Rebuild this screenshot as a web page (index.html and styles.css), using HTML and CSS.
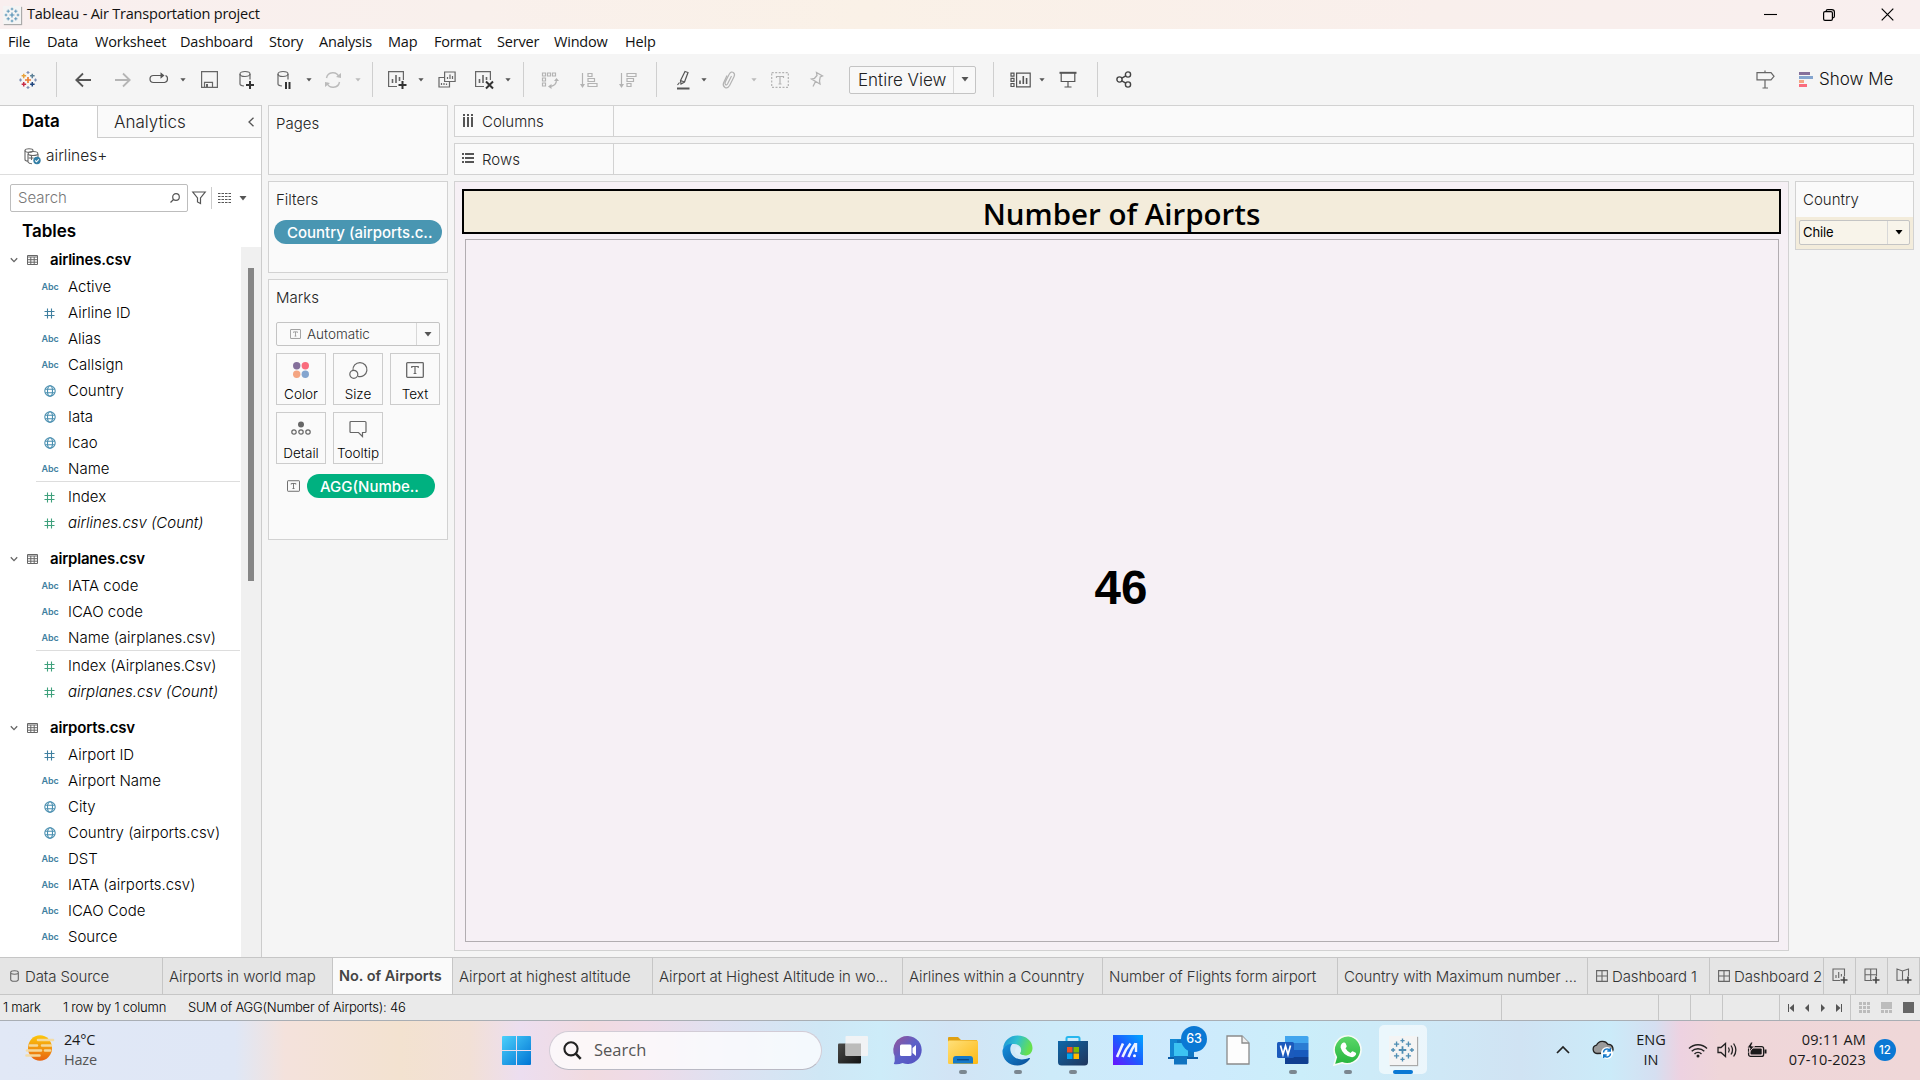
FILE: index.html
```html
<!DOCTYPE html>
<html lang="en">
<head>
<meta charset="utf-8">
<title>Tableau - Air Transportation project</title>
<link rel="stylesheet" href="styles.css">
</head>
<body>
<svg class="defs" width="0" height="0" aria-hidden="true">
  <defs>
    <symbol id="caret" viewBox="0 0 8 5"><path d="M0.5 0h7L4 4.6z" fill="currentColor"/></symbol>
    <symbol id="chev" viewBox="0 0 8 8"><path d="M.8 2.2 4 5.6l3.2-3.4" fill="none" stroke="#666" stroke-width="1.3"/></symbol>
    <symbol id="table" viewBox="0 0 11 10"><path d="M.5.5h10v9H.5zM.5 2h10M.5 4.7h10M.5 7.2h10M3.8 2v7.5M7.2 2v7.5" fill="none" stroke="#666"/></symbol>
    <symbol id="hash" viewBox="0 0 11 11"><path d="M3.5.5v10M7.5.5v10M.5 3.5h10M.5 7.5h10" fill="none" stroke="currentColor" stroke-width="1.1"/></symbol>
    <symbol id="globe" viewBox="0 0 12 12"><g fill="none" stroke="#4a8fb0" stroke-width="1.1"><circle cx="6" cy="6" r="5.2"/><ellipse cx="6" cy="6" rx="2.5" ry="5.2"/><path d="M1.2 4.2h9.6M1.2 7.8h9.6"/></g></symbol>
    <symbol id="tbox" viewBox="0 0 18 16"><rect x=".7" y=".7" width="16.6" height="14.6" rx=".8" fill="none" stroke="currentColor" stroke-width="1.3"/><path d="M5.8 6V4.5h6.4V6M9 4.5v7M7.6 11.5h2.8" fill="none" stroke="currentColor" stroke-width="1.2"/></symbol>
    <symbol id="tableau" viewBox="0 0 24 24"><g fill="none" stroke="#4f8db3" stroke-width="1.3"><path d="M12 8.4v7.2M8.4 12h7.2" stroke-width="1.7"/><path d="M12 1v4M10 3h4M12 19v4M10 21h4M3 10v4M1 12h4M21 10v4M19 12h4M6.3 3.8v5M3.8 6.3h5M17.7 3.8v5M15.2 6.3h5M6.3 15.2v5M3.8 17.7h5M17.7 15.2v5M15.2 17.7h5"/></g></symbol>
    <symbol id="grid4" viewBox="0 0 12 12"><path d="M.6.6h10.8v10.8H.6zM6 .6v10.8M.6 6h10.8" fill="none" stroke="#666" stroke-width="1.1"/></symbol>
    <linearGradient id="win" x1="0" y1="0" x2="1" y2="1"><stop offset="0" stop-color="#4cd0fb"/><stop offset="1" stop-color="#0074d4"/></linearGradient>
    <linearGradient id="sun" x1="0" y1="0" x2="0" y2="1"><stop offset="0" stop-color="#fcc70c"/><stop offset="1" stop-color="#e86410"/></linearGradient>
    <linearGradient id="chatg" x1="0" y1="0" x2="1" y2="1"><stop offset="0" stop-color="#9a5596"/><stop offset=".5" stop-color="#5b60c8"/><stop offset="1" stop-color="#5550c0"/></linearGradient>
    <linearGradient id="fold" x1="0" y1="0" x2="1" y2="1"><stop offset="0" stop-color="#ffe07a"/><stop offset="1" stop-color="#fdb913"/></linearGradient>
    <linearGradient id="edge1" x1="0" y1="0" x2="1" y2=".3"><stop offset="0" stop-color="#1c8fd8"/><stop offset=".5" stop-color="#2fc0cf"/><stop offset="1" stop-color="#66e04e"/></linearGradient>
    <linearGradient id="edge2" x1="0" y1="0" x2="1" y2="1"><stop offset="0" stop-color="#1593df"/><stop offset="1" stop-color="#0b4d96"/></linearGradient>
    <linearGradient id="store" x1="0" y1="0" x2="1" y2="1"><stop offset="0" stop-color="#0f67a8"/><stop offset="1" stop-color="#20365c"/></linearGradient>
    <linearGradient id="asus" x1="0" y1="1" x2="1" y2="0"><stop offset="0" stop-color="#6a12ff"/><stop offset=".5" stop-color="#1b5cff"/><stop offset="1" stop-color="#00a8ff"/></linearGradient>
    <linearGradient id="wa" x1="0" y1="0" x2="0" y2="1"><stop offset="0" stop-color="#5dd86a"/><stop offset="1" stop-color="#25b43c"/></linearGradient>
    <linearGradient id="dark" x1="0" y1="0" x2="1" y2="1"><stop offset="0" stop-color="#4a4a48"/><stop offset="1" stop-color="#141414"/></linearGradient>
  </defs>
</svg>

<header class="titlebar">
  <span class="app-tile small"><svg width="16" height="16"><use href="#tableau"/></svg></span>
  <span class="app-title">Tableau - Air Transportation project</span>
  <div class="win-btns">
    <svg width="13" height="14" viewBox="0 0 13 14"><path d="M0 6.5h13" stroke="#000" stroke-width="1.1"/></svg>
    <svg width="12" height="12" viewBox="0 0 12 12" fill="none" stroke="#000" stroke-width="1.2"><rect x=".6" y="2.6" width="8.8" height="8.8" rx="1.4"/><path d="M3 2.2Q3.2.6 4.8.6h4Q11.4.6 11.4 3v4.2q0 1.5-1.6 1.8"/></svg>
    <svg width="13" height="13" viewBox="0 0 13 13" fill="none" stroke="#000" stroke-width="1.2"><path d="m.7.7 11.6 11.6M12.3.7.7 12.3"/></svg>
  </div>
</header>

<nav class="menubar">
  <span class="m1">File</span><span class="m2">Data</span><span class="m3">Worksheet</span><span class="m4">Dashboard</span><span class="m5">Story</span><span class="m6">Analysis</span><span class="m7">Map</span><span class="m8">Format</span><span class="m9">Server</span><span class="m10">Window</span><span>Help</span>
</nav>

<div class="toolbar">
  <svg width="18" height="18" viewBox="0 0 24 24" fill="none" stroke-width="1.6"><path d="M12 8v8M8 12h8" stroke="#eb7a2e" stroke-width="2.2"/><path d="M6.3 3.5v6M3.5 6.3h6" stroke="#e8a23a" stroke-width="2"/><path d="M17.7 3.5v6M14.8 6.3h6" stroke="#5b7f96" stroke-width="2"/><path d="M6.3 14.8v6M3.5 17.7h6" stroke="#c72c48" stroke-width="2"/><path d="M17.7 14.8v6M14.8 17.7h6" stroke="#1f457e" stroke-width="2"/><path d="M12 0v4M10 2h4M12 20v4M10 22h4M2 10v4M0 12h4M22 10v4M20 12h4" stroke="#7f8fb5"/></svg>
  <i class="sep"></i>
  <svg width="16" height="16" viewBox="0 0 16 16" fill="none" stroke="#555" stroke-width="1.8"><path d="M8 1.500 1.300 8 8 14.500M1.300 8H16"/></svg>
  <svg width="16" height="16" viewBox="0 0 16 16" fill="none" stroke="#b5b5b5" stroke-width="1.8"><path d="M8 1.500 14.700 8 8 14.500M14.700 8H0"/></svg>
  <svg class="up2" width="20" height="12" viewBox="0 0 20 12" fill="none" stroke="#555" stroke-width="1.200"><path d="M14 3.500H4.500a3 3 0 0 0 0 7h11q3-.5 3-3.500t-2-3.300"/><path d="M11.500.3v6.400L15.500 3.500z" fill="#555" stroke="none"/></svg>
  <svg class="cr" width="6" height="4"><use href="#caret"/></svg>
  <svg width="17" height="17" viewBox="0 0 17 17" fill="none" stroke="#666" stroke-width="1.200"><path d="M.6.6h15.800v15.800H.6zM3.500 16.400v-5h8v5"/><path d="M5 13h2v3H5z" fill="#666" stroke="none"/></svg>
  <svg width="18" height="20" viewBox="0 0 18 20" fill="none" stroke="#666" stroke-width="1.200"><ellipse cx="7" cy="4" rx="5" ry="2.500"/><path d="M2 4v10q0 1.500 4 2M12 4v5.500"/><path d="M12 11v8M8 15h8" stroke="#333" stroke-width="2"/></svg>
  <svg width="18" height="20" viewBox="0 0 18 20" fill="none" stroke="#666" stroke-width="1.200"><ellipse cx="7" cy="4" rx="5" ry="2.500"/><path d="M2 4v10q0 1.500 4 2M12 4v5.500"/><path d="M10 12v7M13.500 12v7" stroke="#333" stroke-width="2"/></svg>
  <svg class="cr" width="6" height="4"><use href="#caret"/></svg>
  <svg width="18" height="16" viewBox="0 0 18 16" fill="none" stroke="#bbb" stroke-width="1.400"><path d="M2.500 6A6.500 6.500 0 0 1 15 5M15.500 10A6.500 6.500 0 0 1 3 11"/><path d="m12 5 5 1V1zM6 11l-5-1v5z" fill="#bbb" stroke="none"/></svg>
  <svg class="cr off" width="6" height="4"><use href="#caret"/></svg>
  <i class="sep"></i>
  <svg width="20" height="20" viewBox="0 0 20 20" fill="none" stroke="#666" stroke-width="1.200"><path d="M10 16.500H1.600V1.600h14.800V10"/><path d="M5.500 13V9M9 13V5M12.500 11V7" stroke-width="1.600"/><path d="M15.500 11v8M11.500 15h8" stroke="#333" stroke-width="2"/></svg>
  <svg class="cr" width="6" height="4"><use href="#caret"/></svg>
  <svg width="18" height="18" viewBox="0 0 18 18" fill="none" stroke="#666" stroke-width="1.200"><path d="M6.600 1h10.500v9.500H6.600zM6 6.500H1V16h10.500v-5"/><path d="M9.500 8V6M12 8V3.500M14.500 8V5M3.500 14v-2M6 14v-2M8.500 14v-1.500"/></svg>
  <svg width="20" height="20" viewBox="0 0 20 20" fill="none" stroke="#666" stroke-width="1.200"><path d="M10 16.500H1.600V1.600h14.800V10"/><path d="M5.500 13V9M9 13V5M12.500 10V7" stroke-width="1.600"/><path d="m12 11.500 7 7M19 11.500l-7 7" stroke="#333" stroke-width="2"/></svg>
  <svg class="cr" width="6" height="4"><use href="#caret"/></svg>
  <i class="sep"></i>
  <svg width="18" height="18" viewBox="0 0 18 18" fill="none" stroke="#b3b3b3" stroke-width="1.200"><path d="M1.500 2h3v3h-3zM6.500 2h3v3h-3zM11.500 2h3v3h-3zM1.500 7h3v3h-3zM1.500 12h3v3h-3zM15.500 9q0 6-7 6.500"/><path d="m13 10 2.500-3L18 10zM10.500 13v5L7 15.500z" fill="#b3b3b3" stroke="none"/></svg>
  <svg width="18" height="16" viewBox="0 0 18 16" fill="none" stroke="#b3b3b3" stroke-width="1.200"><path d="M2.500 1v13M8 1.500h4v3H8zM8 6.500h6.500v3H8zM8 11.500h9v3H8z"/><path d="M0 12h5l-2.500 4z" fill="#b3b3b3" stroke="none"/></svg>
  <svg width="18" height="16" viewBox="0 0 18 16" fill="none" stroke="#b3b3b3" stroke-width="1.200"><path d="M2.500 1v13M8 1.500h9v3H8zM8 6.500h6.500v3H8zM8 11.500h4v3H8z"/><path d="M0 12h5l-2.500 4z" fill="#b3b3b3" stroke="none"/></svg>
  <i class="sep"></i>
  <svg width="14" height="20" viewBox="0 0 14 20" fill="none" stroke="#555" stroke-width="1.200"><path d="M9 1.500 12 2.500 8.500 12l-3.500 2-.5-3.500zM4.500 10.500l4 1.500M3.500 12.500 1.500 15"/><path d="M1 18.500h12.500" stroke-width="2"/></svg>
  <svg class="cr" width="6" height="4"><use href="#caret"/></svg>
  <svg width="14" height="18" viewBox="0 0 14 18" fill="none" stroke="#b3b3b3" stroke-width="1.200"><path d="m9.500 5-4 8q-1 1.500-2 .5t-.2-2.500l4-8q2-3 4-1.500t.8 4L7.600 14.500Q5.500 18 3 16.500T1.500 12L5 4.500"/></svg>
  <svg class="cr off" width="6" height="4"><use href="#caret"/></svg>
  <svg width="18" height="16" viewBox="0 0 18 16" fill="none" stroke="#b3b3b3" stroke-width="1.200"><path d="M.7.700h16.600v14.600H.7z" stroke-dasharray="2 1.500"/><path d="M5.500 6V4.500h7V6M9 4.500v7.500M7.500 12h3"/></svg>
  <svg width="14" height="17" viewBox="0 0 14 17" fill="none" stroke="#b3b3b3" stroke-width="1.300"><path d="m6.500 1.500 6 3.500-2.300 1-.7 4 .5 3-8.500-5 3-.7L7 4.500zM5.500 10.500 3 15.500"/></svg>
  <div class="select view-select"><span>Entire View</span><b><svg class="cr" width="8" height="5"><use href="#caret"/></svg></b></div>
  <i class="sep"></i>
  <svg width="21" height="16" viewBox="0 0 21 16" fill="none" stroke="#555" stroke-width="1.200"><path d="M1 1.200h3v3H1zM1 6.300h3v3H1zM1 11.500h3v3H1zM6.600 1.200h13.600v13.600H6.600z"/><path d="M10 12V8.500M13.300 12V4M16.600 12V6" stroke-width="1.600"/></svg>
  <svg class="cr" width="6" height="4"><use href="#caret"/></svg>
  <svg width="18" height="17" viewBox="0 0 18 17" fill="none" stroke="#555" stroke-width="1.200"><path d="M.5 1.800h17" stroke-width="2"/><path d="M2.200 2v8.500h13.600V2M9 10.500v5.500M5.500 16h7"/></svg>
  <i class="sep"></i>
  <svg width="16" height="17" viewBox="0 0 16 17" fill="none" stroke="#444" stroke-width="1.400"><circle cx="3.500" cy="8.500" r="2.600"/><circle cx="12" cy="3.500" r="2.600"/><circle cx="12" cy="13.500" r="2.600"/><path d="m5.800 7.200 4-2.400M5.800 9.800l4 2.400"/></svg>
  <span></span>
  <svg width="19" height="19" viewBox="0 0 19 19" fill="none" stroke="#666" stroke-width="1.200"><path d="M1 2.700h14l3 3.600-3 3.600H1zM9 .5v2M9 10v8M6.500 18h5.500"/></svg>
  <div class="showme"><svg width="14" height="15" viewBox="0 0 14 15"><path d="M0 0h11v3H0z" fill="#85709b"/><path d="M0 4h14v3H0z" fill="#84a5cf"/><path d="M0 8h5v3H0z" fill="#f4a582"/><path d="M0 12h8v3H0z" fill="#fa6c7d"/></svg><span>Show Me</span></div>
</div>

<main class="workspace">
  <aside class="datapane">
    <div class="pane-tabs"><span class="on">Data</span><span class="off">Analytics<svg width="6" height="10" viewBox="0 0 6 10"><path d="M5.500.7 1 5l4.500 4.300" fill="none" stroke="#555" stroke-width="1.300"/></svg></span></div>
    <div class="source"><svg width="17" height="17" viewBox="0 0 17 17" fill="none" stroke="#666" stroke-width="1.100"><ellipse cx="5" cy="2.500" rx="4" ry="1.800"/><path d="M1 2.500v9q0 1.500 3 1.800M4 6v8q1 1.800 4 1.800M14 6v3"/><ellipse cx="9" cy="5.500" rx="4.800" ry="2"/><path d="M4.500 10h5M7.500 8v4"/><circle cx="13" cy="12.500" r="3.700" fill="#337fa6" stroke="none"/><path d="m11.200 12.500 1.300 1.300 2.300-2.500" stroke="#fff"/></svg><span>airlines+</span></div>
    <div class="finder">
      <div class="search"><span>Search</span><svg width="10" height="10" viewBox="0 0 10 10" fill="none" stroke="#555" stroke-width="1.200"><circle cx="6" cy="4" r="3.300"/><path d="M3.500 6.500.5 9.500"/></svg></div>
      <svg width="14" height="14" viewBox="0 0 14 14" fill="none" stroke="#555" stroke-width="1.200"><path d="M.8 1h12.400L8.500 7v5.500L5.500 11V7z"/></svg>
      <i></i>
      <svg width="13" height="10" viewBox="0 0 13 10"><path d="M0 .5h13M0 3.500h13M0 6.500h13M0 9.500h13" stroke="#555" stroke-width="1" stroke-dasharray="2.500 1"/></svg>
      <svg class="cr" width="8" height="5"><use href="#caret"/></svg>
    </div>
    <h2>Tables</h2>
    <div class="tree">
      <div class="fields">
        <div class="tbl"><svg width="8" height="8"><use href="#chev"/></svg><svg width="11" height="10"><use href="#table"/></svg><span>airlines.csv</span></div>
        <div class="f"><em>Abc</em><span>Active</span></div>
        <div class="f"><svg class="dim" width="11" height="11"><use href="#hash"/></svg><span>Airline ID</span></div>
        <div class="f"><em>Abc</em><span>Alias</span></div>
        <div class="f"><em>Abc</em><span>Callsign</span></div>
        <div class="f"><svg width="12" height="12"><use href="#globe"/></svg><span>Country</span></div>
        <div class="f"><svg width="12" height="12"><use href="#globe"/></svg><span>Iata</span></div>
        <div class="f"><svg width="12" height="12"><use href="#globe"/></svg><span>Icao</span></div>
        <div class="f"><em>Abc</em><span>Name</span></div>
        <hr>
        <div class="f"><svg class="mea" width="11" height="11"><use href="#hash"/></svg><span>Index</span></div>
        <div class="f"><svg class="mea" width="11" height="11"><use href="#hash"/></svg><span class="it">airlines.csv (Count)</span></div>
        <div class="tbl next"><svg width="8" height="8"><use href="#chev"/></svg><svg width="11" height="10"><use href="#table"/></svg><span>airplanes.csv</span></div>
        <div class="f"><em>Abc</em><span>IATA code</span></div>
        <div class="f"><em>Abc</em><span>ICAO code</span></div>
        <div class="f"><em>Abc</em><span>Name (airplanes.csv)</span></div>
        <hr>
        <div class="f"><svg class="mea" width="11" height="11"><use href="#hash"/></svg><span>Index (Airplanes.Csv)</span></div>
        <div class="f"><svg class="mea" width="11" height="11"><use href="#hash"/></svg><span class="it">airplanes.csv (Count)</span></div>
        <div class="tbl next"><svg width="8" height="8"><use href="#chev"/></svg><svg width="11" height="10"><use href="#table"/></svg><span>airports.csv</span></div>
        <div class="f"><svg class="dim" width="11" height="11"><use href="#hash"/></svg><span>Airport ID</span></div>
        <div class="f"><em>Abc</em><span>Airport Name</span></div>
        <div class="f"><svg width="12" height="12"><use href="#globe"/></svg><span>City</span></div>
        <div class="f"><svg width="12" height="12"><use href="#globe"/></svg><span>Country (airports.csv)</span></div>
        <div class="f"><em>Abc</em><span>DST</span></div>
        <div class="f"><em>Abc</em><span>IATA (airports.csv)</span></div>
        <div class="f"><em>Abc</em><span>ICAO Code</span></div>
        <div class="f"><em>Abc</em><span>Source</span></div>
      </div>
      <div class="track"><div class="thumb"></div></div>
    </div>
  </aside>

  <section class="cards">
    <div class="card pages"><h3>Pages</h3></div>
    <div class="card filters"><h3>Filters</h3><div class="pill blue">Country (airports.c..</div></div>
    <div class="card marks">
      <h3>Marks</h3>
      <div class="select mark-select"><svg width="11" height="10"><use href="#tbox"/></svg><span>Automatic</span><b><svg class="cr" width="8" height="5"><use href="#caret"/></svg></b></div>
      <div class="mark-grid">
        <div><svg width="18" height="18" viewBox="0 0 18 18"><circle cx="4.700" cy="4.700" r="3.700" fill="#85709b"/><circle cx="13.300" cy="4.700" r="3.700" fill="#fa6c7d"/><circle cx="4.700" cy="13.300" r="3.700" fill="#f4a582"/><circle cx="13.300" cy="13.300" r="3.700" fill="#84a5cf"/></svg><span>Color</span></div>
        <div><svg width="18" height="18" viewBox="0 0 18 18" fill="none" stroke="#666" stroke-width="1.200"><path d="M4 9.500A7 7 0 1 1 9 15.300"/><circle cx="4.800" cy="13.300" r="4"/></svg><span>Size</span></div>
        <div class="t"><svg width="18" height="16"><use href="#tbox"/></svg><span>Text</span></div>
        <div><svg width="20" height="18" viewBox="0 0 20 18" fill="none" stroke="#666" stroke-width="1.200"><circle cx="10" cy="4.500" r="3" fill="#666" stroke="none"/><circle cx="3" cy="12" r="2.200"/><circle cx="10" cy="12" r="2.200"/><circle cx="17" cy="12" r="2.200"/></svg><span>Detail</span></div>
        <div><svg width="18" height="18" viewBox="0 0 18 18" fill="none" stroke="#666" stroke-width="1.200"><path d="M2 1.500h14q1 0 1 1v9q0 1-1 1h-2.500v4l-4-4H2q-1 0-1-1v-9q0-1 1-1z"/></svg><span>Tooltip</span></div>
      </div>
      <div class="mark-pill"><svg width="13" height="12"><use href="#tbox"/></svg><div class="pill green">AGG(Numbe..</div></div>
    </div>
  </section>

  <section class="canvas">
    <div class="shelf"><div class="shelf-name"><svg width="12" height="13" viewBox="0 0 12 13"><path d="M2 0v13M6 0v13M10 0v13" stroke="#555" stroke-width="2" stroke-dasharray="2 1 20"/></svg><span>Columns</span></div></div>
    <div class="shelf"><div class="shelf-name"><svg width="12" height="10" viewBox="0 0 12 10"><path d="M0 1h12M0 5h12M0 9h12" stroke="#555" stroke-width="2" stroke-dasharray="2 1 20"/></svg><span>Rows</span></div></div>
    <div class="lower">
      <div class="view">
        <h1>Number of Airports</h1>
        <div class="plot">46</div>
      </div>
      <div class="quick">
        <h3>Country</h3>
        <div class="quick-body"><div class="select"><span>Chile</span><b><svg class="cr" width="8" height="5"><use href="#caret"/></svg></b></div></div>
      </div>
    </div>
  </section>
</main>

<div class="tabs">
  <span class="ds"><svg width="9" height="12" viewBox="0 0 9 12" fill="none" stroke="#666" stroke-width="1.100"><path d="M.7 2.500Q.7.700 4.500.700t3.800 1.800v7q0 1.800-3.800 1.800T.7 9.500zM.7 3.500q4 1.500 7.600 0"/></svg>Data Source</span>
  <span>Airports in world map</span>
  <span class="active">No. of Airports</span>
  <span>Airport at highest altitude</span>
  <span>Airport at Highest Altitude in wo...</span>
  <span>Airlines within a Counntry</span>
  <span>Number of Flights form airport</span>
  <span>Country with Maximum number ...</span>
  <span class="db"><svg width="12" height="12"><use href="#grid4"/></svg>Dashboard 1</span>
  <span class="db"><svg width="12" height="12"><use href="#grid4"/></svg>Dashboard 2</span>
  <span class="add"><svg width="16" height="16" viewBox="0 0 16 16" fill="none" stroke="#666" stroke-width="1.100"><path d="M8 12.500H1V1h11.500v7M4 10V7M6.700 10V4M9.400 8.500V6"/><path d="M12 8.500v7M8.500 12h7" stroke="#444" stroke-width="1.600"/></svg></span>
  <span class="add"><svg width="16" height="16" viewBox="0 0 16 16" fill="none" stroke="#666" stroke-width="1.100"><path d="M8 12.500H1V1h11.500v7M6.700 1v11.500M1 6.700h11.500"/><path d="M12 8.500v7M8.500 12h7" stroke="#444" stroke-width="1.600"/></svg></span>
  <span class="add"><svg width="16" height="16" viewBox="0 0 16 16" fill="none" stroke="#666" stroke-width="1.100"><path d="M8 12H7L1 12.500V1l5.500 2L12.500 1v7M6.500 3v9"/><path d="M12 8.500v7M8.500 12h7" stroke="#444" stroke-width="1.600"/></svg></span>
</div>

<div class="status">
  <div class="s-text"><span class="s1">1 mark</span><span class="s2">1 row by 1 column</span><span>SUM of AGG(Number of Airports): 46</span></div>
  <div></div><div></div><div></div><div></div>
  <div class="nav">
    <svg width="6" height="8" viewBox="0 0 6 8"><path d="M0 0h1v8H0zM6 0v8L1.500 4z" fill="#555"/></svg>
    <svg width="6" height="8" viewBox="0 0 6 8"><path d="M5 0v8L1 4z" fill="#555"/></svg>
    <svg width="6" height="8" viewBox="0 0 6 8"><path d="M1 0v8l4-4z" fill="#555"/></svg>
    <svg width="6" height="8" viewBox="0 0 6 8"><path d="M5 0h1v8H5zM0 0v8l4.500-4z" fill="#555"/></svg>
  </div>
  <div class="modes">
    <svg width="11" height="11" viewBox="0 0 11 11"><path d="M0 0h3v3H0zM4 0h3v3H4zM8 0h3v3H8zM0 4h3v3H0zM4 4h3v3H4zM8 4h3v3H8zM0 8h3v3H0zM4 8h3v3H4zM8 8h3v3H8z" fill="#bcbcbc"/></svg>
    <svg width="11" height="11" viewBox="0 0 11 11"><path d="M0 0h11v7H0zM0 8h3v3H0zM4 8h3v3H4zM8 8h3v3H8z" fill="#bcbcbc"/></svg>
    <svg width="11" height="11" viewBox="0 0 11 11"><path d="M0 0h11v11H0z" fill="#666"/></svg>
  </div>
</div>

<footer class="taskbar">
  <div class="weather">
    <svg width="30" height="28" viewBox="0 0 30 28"><ellipse cx="15" cy="14" rx="12" ry="12.800" fill="url(#sun)"/><g stroke="#f5dca2" stroke-width="2.600" stroke-linecap="round" opacity=".95"><path d="M13 6h15M5 11.500h7M17 11.500h9M2 16.500h14M20 16.500h5M1.500 21.500h13"/></g></svg>
    <div><span>24°C</span><span class="haze">Haze</span></div>
  </div>
  <svg class="start" width="29" height="29" viewBox="0 0 29 29"><path d="M1 0h13v14H0V1q0-1 1-1zM15 0h13q1 0 1 1v13H15zM0 15h14v14H1q-1 0-1-1zM15 15h14v13q0 1-1 1H15z" fill="url(#win)"/></svg>
  <div class="tsearch"><svg width="19" height="19" viewBox="0 0 19 19" fill="none" stroke="#222" stroke-width="2.100"><circle cx="8" cy="7.800" r="6.600"/><path d="m12.700 12.700 5 5.200" stroke-width="2.500"/></svg><span>Search</span></div>
  <div class="apps">
    <div><svg width="30" height="30" viewBox="0 0 30 30"><rect y="8.500" width="23" height="20" rx="1" fill="url(#dark)"/><rect x="7.500" y="1" width="22.500" height="20" rx="1" fill="#f2f3f4" opacity=".95"/><path d="M7.500 8.500H23V21H8.500q-1 0-1-1z" fill="#bcbcbb"/></svg></div>
    <div><svg width="30" height="30" viewBox="0 0 30 30"><path d="M15 1a14 14 0 1 1-5.500 27Q5 30 .8 29q1.500-3 .8-8A14 14 0 0 1 15 1z" fill="url(#chatg)"/><rect x="7" y="9.500" width="11.500" height="11.500" rx="1.500" fill="#fff"/><path d="m19.500 13 3.500-3v11l-3.500-3z" fill="#fff"/></svg></div>
    <div class="run"><svg width="30" height="30" viewBox="0 0 30 30"><path d="M0 3q0-1 1-1h9l3 3h16v8H0z" fill="#e0a012"/><rect y="5.500" width="30" height="23.500" rx="1.200" fill="url(#fold)"/><path d="M5 28.500V24q0-3 3-3h14q3 0 3 3v4.500z" fill="#1579c8"/><path d="M9 24.700h12" stroke="#0b4a86" stroke-width="1.400"/></svg></div>
    <div class="run"><svg width="31" height="31" viewBox="0 0 31 31"><path d="M1 14C2 5 8 .5 15.500.5 24 .5 30.500 6 30.500 13c0 5-3.500 7.500-7.500 7.500s-6-1.500-4.500-3.500c2-4-1-8-6.500-8S2 11.500 1 14z" fill="url(#edge1)"/><path d="M.5 15.500C1.500 11 6 8.500 10.500 8.700c-2 2-3 5-1.500 9 2 5 8 8 14.500 6.300 2-.5 4-1.500 4.500-.8s-4.500 7.300-12.500 7.300C6.500 30.500 0 24 .5 15.500z" fill="url(#edge2)"/><path d="M15 11.500c3 1 4.500 3.500 3.500 5.500-1.500 2 .5 3.500 4.500 3.500-5 2-9.500-.5-10-4-.2-2 .8-4 2-5z" fill="#d8eefa"/></svg></div>
    <div class="run"><svg width="30" height="31" viewBox="0 0 30 31"><path d="M8.500 8V3.500q0-1.500 1.500-1.500h10q1.500 0 1.500 1.500V8" fill="none" stroke="#27b7ee" stroke-width="2"/><path d="M0 6h30v21q0 3.500-3.500 3.500h-23Q0 30.500 0 27z" fill="url(#store)"/><path d="M9 12h5.500v5.500H9z" fill="#f25022"/><path d="M15.500 12H21v5.500h-5.500z" fill="#7fba00"/><path d="M9 18.500h5.500V24H9z" fill="#00a4ef"/><path d="M15.500 18.500H21V24h-5.500z" fill="#ffb900"/></svg></div>
    <div><svg width="30" height="30" viewBox="0 0 30 30"><path d="M0 0h30v30H0z" fill="url(#asus)"/><path d="M4 22 10 8.500M9.500 22q3-8 8-13.500M15.500 22q3-8 7-13.500" stroke="#eef3ff" stroke-width="2.600" fill="none"/><path d="M23 8v9" stroke="#eef3ff" stroke-width="2.400"/><circle cx="21.500" cy="20.700" r="1.500" fill="#fff"/></svg></div>
    <div class="phone"><svg width="30" height="30" viewBox="0 0 30 30"><path d="M2 4h13v18H2z" fill="#1387d2"/><path d="M0 22h30v2H0z" fill="#0b5ea8"/><path d="M9 5h17v17H9z" fill="#0f75c2"/><path d="M6 8h14v13H6z" fill="#3cc3f2"/><path d="M6 21h13v8.500H6z" fill="#1073c0"/></svg><b>63</b></div>
    <div><svg width="24" height="30" viewBox="0 0 24 30"><path d="M1 1h15l7 7v21H1z" fill="#fdfdfd" stroke="#8a8a8a" stroke-width="1.300"/><path d="M16 1v7h7" fill="#eee" stroke="#8a8a8a" stroke-width="1.300"/></svg></div>
    <div class="run word"><svg width="32" height="30" viewBox="0 0 32 30"><path d="M8 1h22q1.500 0 1.500 1.500V8H8z" fill="#41a5ee"/><path d="M8 8h23.500v7H8z" fill="#2b7cd3"/><path d="M8 15h23.500v7H8z" fill="#185abd"/><path d="M8 22h23.500v5.500q0 1.500-1.500 1.500H8z" fill="#103f91"/><rect y="7" width="17" height="16" rx="1.500" fill="#1b5abc"/><path d="m3.500 10.500 2.500 9 2.500-8.500 2.500 8.500 2.500-9" fill="none" stroke="#fff" stroke-width="1.700"/></svg></div>
    <div class="run"><svg width="30" height="31" viewBox="0 0 30 31"><path d="M15.500.8A14 14 0 1 1 9 27.800L1 30l2.300-7.800A14 14 0 0 1 15.500.8z" fill="url(#wa)" stroke="#f7fbf7" stroke-width="1.600"/><path d="M10.500 7.500q1.500-.5 2.200 1l1 2.500q.2 1-1.200 2.300 1.800 3.500 5 4.700 1.500-2 2.200-1.800l3 1.500q.9.600 0 2.400-1.400 2.500-4.600 2-8.500-2-10.500-9.500-.2-3.800 2.900-5.100z" fill="#fff"/></svg></div>
    <div class="current"><span class="app-tile"><svg width="25" height="26"><use href="#tableau"/></svg></span></div>
  </div>
  <div class="tray">
    <svg class="up" width="14" height="8" viewBox="0 0 14 8" fill="none" stroke="#222" stroke-width="1.700"><path d="m1 7 6-6 6 6"/></svg>
    <svg class="cloud" width="22" height="20" viewBox="0 0 22 20"><path d="M5 13.500a4.200 4.200 0 0 1-.5-8.300A6.500 6.500 0 0 1 16 4.500a4.500 4.500 0 0 1 2.500 8.500z" fill="#9a9a9a" stroke="#222" stroke-width="1.300"/><circle cx="15" cy="13" r="6" fill="#fff"/><path d="M11.500 12.500a3.600 3.600 0 0 1 6.500-2M18.500 13.500a3.600 3.600 0 0 1-6.500 2M18.300 8v3h-3M11.700 18v-3h3" fill="none" stroke="#1578c8" stroke-width="1.400"/></svg>
    <div class="lang"><span>ENG</span><span>IN</span></div>
    <svg class="wifi" width="20" height="15" viewBox="0 0 20 15" fill="none" stroke="#222" stroke-width="1.400"><path d="M1 5.500a12.600 12.600 0 0 1 18 0M3.700 8.300a8.900 8.900 0 0 1 12.600 0M6.500 11a5 5 0 0 1 7 0"/><circle cx="10" cy="13" r="1.500" fill="#222" stroke="none"/></svg>
    <svg class="vol" width="21" height="16" viewBox="0 0 21 16" fill="none" stroke="#222" stroke-width="1.300"><path d="M1 5.500h3l4.500-4v13L4 10.500H1zM11.500 5.500q1.600 2.500 0 5M14 3.500q3 4.500 0 9M16.600 1.500q4.500 6.500 0 13"/></svg>
    <svg class="bat" width="20" height="16" viewBox="0 0 20 16"><rect x="1.600" y="4.600" width="15" height="9.800" rx="2" fill="none" stroke="#1a1a1a" stroke-width="1.300"/><rect x="3.500" y="6.500" width="11.200" height="6" rx=".8" fill="#1a1a1a"/><path d="M17.500 7.500h2v4h-2z" fill="#1a1a1a"/><path d="M4 0 0 6h3L2 10.500 7.500 4H4.500L6 0z" fill="#1a1a1a" stroke="#efd5d9" stroke-width=".9"/></svg>
    <div class="clock"><span>09:11 AM</span><span>07-10-2023</span></div>
    <b>12</b>
  </div>
</footer>
</body>
</html>
```
FILE: styles.css
```css
* { box-sizing: border-box; }
body {
  margin: 0; width: 1920px; height: 1080px; overflow: hidden;
  display: flex; flex-direction: column;
  background: #f5f5f5; color: #1f1f1f;
  font: 300 15px/1.2 Inter, "Open Sans", sans-serif; white-space: nowrap;
}
.defs { position: absolute; }
h1, h2, h3, hr { margin: 0; border: 0; font-weight: 300; }
svg { display: block; flex: none; overflow: visible; }
em { font-style: normal; }
.cr { color: #555; }
.cr.off { color: #bbb; }

.titlebar, .menubar, .weather, .tsearch, .lang, .clock { font-family: "Open Sans", "Noto Sans", sans-serif; font-weight: 400; }
.titlebar {
  height: 29px; flex: none; display: flex; align-items: center; padding-left: 3px;
  background: linear-gradient(90deg, #f9efef 0, #f9f0ec 25%, #faf1e7 45%, #f9efec 75%, #f9efef 100%);
  color: #111; font-size: 14.5px; letter-spacing: -.22px;
}
.app-title { margin-top: -1px; }
.app-tile { display: grid; place-items: center; width: 28px; height: 29px; background: #f4f4f4; box-shadow: 1px 1px 1px #aaa; }
.app-tile.small { width: 18px; height: 18px; margin-right: 6px; }
.win-btns { margin-left: auto; display: flex; align-items: center; gap: 46px; padding-right: 26px; }
.menubar { height: 25px; flex: none; background: #fff; display: flex; align-items: center; padding: 1px 0 0 8px; font-size: 14.5px; color: #111; letter-spacing: -.2px; }
.menubar span { flex: none; }
.m1 { width: 39px; } .m2 { width: 48px; } .m3 { width: 85px; } .m4 { width: 89px; } .m5 { width: 50px; }
.m6 { width: 69px; } .m7 { width: 46px; } .m8 { width: 63px; } .m9 { width: 57px; } .m10 { width: 71px; }

.toolbar {
  height: 51px; flex: none; display: grid; align-items: center; justify-items: center;
  grid-template-columns: 55px 8px 40px 39px 34px 14px 38px 38px 37px 12px 35px 15px 14px 36px 12px 39px 36px 12px 18px 35px 43px 36px 20px 33px 10px 40px 9px 44px 30px 152px 18px 36px 7px 46px 12px 42px 1fr 40px 135px;
}
.up2 { margin-top: -3px; }
.sep { width: 1px; height: 35px; background: #cfcfcf; }
.toolbar .sep:nth-child(2) { justify-self: start; margin-left: 1px; }
.select { display: flex; align-items: center; border: 1px solid #c4c4c4; border-radius: 2px; background: #fafafa; }
.select b { align-self: stretch; margin-left: auto; display: grid; place-items: center; border-left: 1px solid #d8d8d8; }
.view-select { width: 127px; height: 28px; margin-left: 9px; font-size: 17px; color: #222; background: #f8f8f8; padding-left: 8px; }
.view-select span { padding-top: 1px; }
.view-select b { width: 22px; }
.showme { justify-self: start; display: flex; align-items: center; gap: 6px; padding-left: 14px; font-size: 17px; color: #111; }

.workspace { height: 852px; flex: none; display: grid; grid-template-columns: 262px 180px 1460px; column-gap: 6px; }
.datapane { background: #fff; border-top: 1px solid #ccc; border-right: 1px solid #ccc; display: flex; flex-direction: column; }
.pane-tabs { display: flex; height: 32px; flex: none; }
.pane-tabs .on { width: 97px; padding: 5px 0 0 22px; font-weight: 600; font-size: 17px; color: #000; }
.pane-tabs .off { flex: 1; display: flex; align-items: center; justify-content: space-between; padding: 2px 7px 0 16px; border-left: 1px solid #ccc; border-bottom: 1px solid #ccc; background: #fafafa; font-size: 17px; color: #222; }
.pane-tabs .off svg { margin-top: -2px; }
.source { height: 37px; flex: none; display: flex; align-items: center; gap: 5px; padding-left: 24px; border-bottom: 1px solid #ddd; color: #222; font-size: 15.500px; }
.finder { display: flex; align-items: center; margin: 9px 0 0 10px; }
.search { width: 178px; height: 28px; border: 1px solid #bdbdbd; border-radius: 2px; display: flex; align-items: center; justify-content: space-between; padding: 0 7px; color: #777; margin-right: 4px; }
.finder i { width: 1px; height: 22px; background: #ccc; margin: 0 6px 0 5px; }
.finder .cr { margin-left: 8px; }
.datapane h2 { font-size: 17px; line-height: 20px; font-weight: 600; color: #000; margin: 9px 0 6px 22px; }
.tree { flex: 1; display: flex; min-height: 0; }
.fields { flex: 1; }
.track { width: 20px; background: #f0f0f0; padding: 21px 0 0 7px; }
.thumb { width: 6px; height: 313px; background: #868686; }
.tbl { height: 28px; margin-top: -1px; display: flex; align-items: center; padding-left: 10px; font-weight: 600; color: #000; letter-spacing: -.2px; }
.tbl svg + svg { margin: 0 12px 0 9px; }
.tbl.next { margin-top: 9px; }
.f { height: 26px; display: grid; grid-template-columns: 16px 1fr; column-gap: 10px; align-items: center; justify-items: center; padding-left: 42px; color: #000; }
.f svg { margin-left: -1px; }
.f span { justify-self: start; }
.f em { font-size: 9px; font-weight: 600; color: #3f7f9f; letter-spacing: -.1px; }
.dim { color: #3f7f9f; } .mea { color: #3fa07c; }
.it { font-style: italic; }
.fields hr { height: 1px; background: #ddd; margin: -1px 1px 2px 36px; }

.cards { display: flex; flex-direction: column; gap: 6px; }
.card, .quick { background: #fafafa; border: 1px solid #d2d2d2; }
.card { padding: 0 7px; }
h3 { font-size: 15px; line-height: 18px; color: #222; padding: 9px 0 0 0; }
.pages { height: 70px; } .filters { height: 92px; } .marks { height: 261px; }
.pill { height: 24px; border-radius: 12px; color: #fff; font-weight: 500; line-height: 25px; font-size: 15px; }
.blue { background: #4996b2; width: 168px; margin: 11px 0 0 -2px; padding-left: 13px; }
.green { background: #00b180; width: 128px; padding-left: 13px; }
.mark-select { width: 164px; height: 24px; margin-top: 15px; padding-left: 13px; font-size: 13.500px; color: #333; gap: 6px; }
.mark-select > svg { color: #888; }
.mark-select b { width: 23px; }
.mark-grid { display: grid; grid-template-columns: repeat(3, 50px); gap: 7px; margin-top: 7px; }
.mark-grid > div { height: 52px; border: 1px solid #ccc; display: flex; flex-direction: column; align-items: center; justify-content: space-between; padding: 7px 0 2px; font-size: 13.500px; color: #000; }
.mark-grid .t { padding-top: 8px; }
.mark-grid .t svg { color: #666; }
.mark-pill { display: flex; align-items: center; gap: 7px; padding-left: 11px; margin-top: 10px; color: #666; }

.canvas { display: flex; flex-direction: column; gap: 6px; }
.shelf { height: 32px; flex: none; border: 1px solid #d2d2d2; background: #fafafa; }
.shelf-name { height: 30px; width: 159px; border-right: 1px solid #d2d2d2; display: flex; align-items: center; gap: 8px; padding-left: 7px; color: #222; }
.shelf-name svg { margin-top: -2px; }
.shelf-name span { padding-top: 2px; }
.lower { display: grid; grid-template-columns: 1335px 119px; column-gap: 6px; align-items: start; }
.view { height: 770px; background: #f6f0f5; border: 1px solid #d2d2d2; padding: 7px; }
h1 { height: 45px; border: 2px solid #000; background: #f3ecdb; color: #000; font: 600 29.500px/45px "Open Sans", "Noto Sans", sans-serif; text-align: center; }
.plot { height: 703px; margin: 5px 2px 0 3px; padding: 0 2px 6px 0; border: 1px solid #b2adb1; display: grid; place-items: center; font: 700 47.500px "Liberation Sans", Arial, sans-serif; color: #000; }
.quick { height: 69px; display: flex; flex-direction: column; }
.quick h3 { flex: 1; padding-left: 7px; }
.quick-body { height: 32px; background: #f3ecdb; padding: 3px; }
.quick .select { height: 25px; background: #f8f4ea; padding-left: 3px; font-size: 13px; color: #000; font-weight: 400; letter-spacing: -.1px; }
.quick .select b { width: 22px; }
.quick .cr { color: #000; }

.tabs { height: 38px; flex: none; display: grid; border-top: 1px solid #c6c6c6; border-bottom: 1px solid #c6c6c6; background: #e5e5e5; color: #333; grid-template-columns: 163px 170px 120px 200px 250px 200px 235px 250px 122px 114px 32px 32px 32px; font-size: 15px; letter-spacing: -.12px; }
.tabs span { display: flex; align-items: center; border-right: 1px solid #c6c6c6; padding-left: 6px; overflow: hidden; padding-top: 2px; }
.tabs .active { background: #fafafa; font-weight: 600; color: #444; padding: 0 0 0 6px; font-size: 14.500px; letter-spacing: -.02px; }
.tabs .ds { padding-left: 10px; gap: 6px; }
.tabs .ds svg { margin-top: -2px; }
.tabs .db { padding-left: 8px; gap: 4px; }
.tabs .db svg { margin-top: -2px; }
.tabs .add { padding: 0; justify-content: center; }

.status { height: 25px; flex: none; display: grid; grid-template-columns: 1502px 157px 32px 32px 57px 71px 69px; background: #eaeaea; font-size: 13px; color: #000; letter-spacing: -.22px; }
.status > div { border-right: 1px solid #c6c6c6; display: flex; align-items: center; }
.s1 { width: 60px; } .s2 { width: 125px; }
.status .s-text { padding: 1px 0 0 3px; }
.status .nav { gap: 10px; padding-left: 8px; }
.status .modes { gap: 11px; padding-left: 8px; border: 0; }

.taskbar {
  height: 60px; flex: none; display: flex; align-items: center; color: #1a1a1a; box-shadow: inset 0 1px #a9aeb4;
  background: linear-gradient(90deg, #e1e8f6 0, #dfe7f6 235px, #f4e2dc 285px, #f3e2d0 400px, #f2e0d6 470px, #ecdef0 520px, #f1dbe0 590px, #eedbe8 645px, #dfe1f1 720px, #cfe7f5 820px, #cdecf9 880px, #d2e4f5 950px, #cdebf9 1050px, #ceeafd 1180px, #cbeefa 1300px, #cfe8f6 1440px, #d0e3f3 1520px, #cbebf9 1610px, #d5dff1 1655px, #edd2e1 1680px, #efd6d9 1720px, #efd7d8 1920px);
}
.weather { width: 502px; padding-left: 25px; display: flex; align-items: center; gap: 9px; font-size: 14.500px; line-height: 20px; letter-spacing: -.2px; }
.weather div { display: flex; flex-direction: column; }
.weather svg { margin-top: -4px; }
.haze { color: #555; }
.start { margin: 1px 18px 0 0; }
.tsearch { width: 273px; height: 39px; margin-right: 3px; display: flex; align-items: center; gap: 12px; padding-left: 13px; border-radius: 20px; border: 1px solid #d2ccd6; border-bottom-color: #b9b9c4; background: rgba(255,255,255,.76); font-size: 16.500px; color: #555; }
.apps { display: flex; height: 60px; }
.apps > div { width: 55px; position: relative; display: grid; place-items: center; }
.run::after { content: ""; position: absolute; left: 24px; bottom: 6px; width: 8px; height: 4px; border-radius: 2px; background: #7b8790; }
.phone b { position: absolute; left: 26px; top: 6px; width: 26px; height: 26px; line-height: 25px; border-radius: 13px; background: #0a78d4; color: #fff; font-size: 12.500px; text-align: center; font-weight: 500; }
.apps .current::before { content: ""; position: absolute; inset: 5px 3px 6px 4px; border-radius: 5px; background: rgba(255,255,255,.6); }
.current::after { content: ""; position: absolute; left: 18px; bottom: 6px; width: 20px; height: 4px; border-radius: 2px; background: #0a78d4; }
.current .app-tile { position: relative; }
.tray { flex: 1; display: flex; align-items: center; font-size: 14.500px; padding-left: 126px; }
.tray .cloud { margin-left: 22px; }
.lang { width: 50px; margin-left: 12px; display: flex; flex-direction: column; align-items: center; line-height: 20px; }
.wifi { margin-left: 12px; } .vol { margin-left: 9px; } .bat { margin-left: 9px; }
.clock { margin-left: auto; display: flex; flex-direction: column; align-items: flex-end; line-height: 20px; letter-spacing: .15px; }
.tray b { width: 22px; height: 22px; border-radius: 11px; background: #0a78d4; color: #fff; font-size: 11.500px; line-height: 22px; text-align: center; font-weight: 500; margin: 0 24px 0 8px; }
```
